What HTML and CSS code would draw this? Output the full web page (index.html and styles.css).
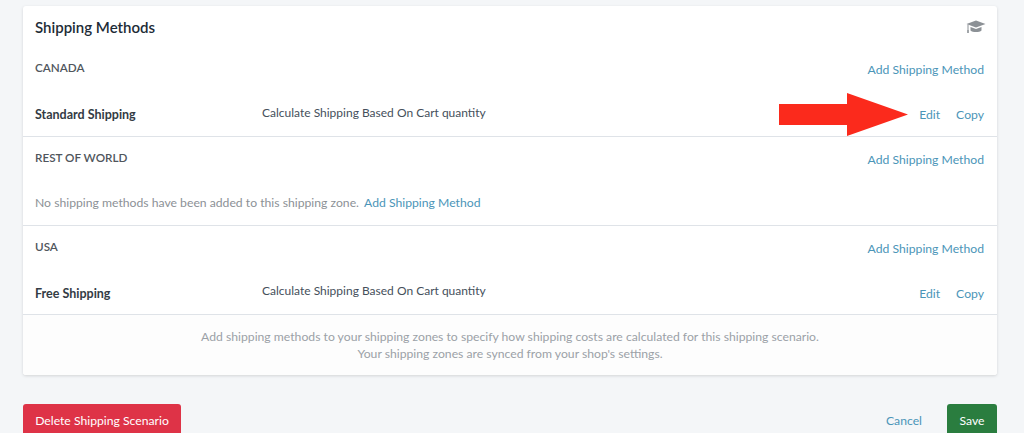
FILE: index.html
```html
<!DOCTYPE html>
<html lang="en">
<head>
    <meta charset="UTF-8">
    <title>Shipping Methods</title>
    <link rel="stylesheet" href="styles.css">
</head>
<body>
    <div class="main">
        <div class="card">
            <div class="card-head">
                <h2>Shipping Methods</h2>
                <svg class="cap" viewBox="0 0 20 14" width="20" height="14">
                    <path d="M10 0.5 L19.5 4 L10 7.5 L0.5 4 Z" fill="#8c9196"/>
                    <path d="M4.5 7 L10 9 L15.5 7 L15.5 10.5 C13.5 12.6 6.5 12.6 4.5 10.5 Z" fill="#8c9196"/>
                    <path d="M2 4.5 L2 10" stroke="#8c9196" stroke-width="1" fill="none"/>
                    <rect x="1.2" y="10" width="1.6" height="3" fill="#8c9196"/>
                </svg>
            </div>
            <div class="zone first">
                <div class="zone-head">
                    <span class="zone-name">CANADA</span>
                    <a class="link">Add Shipping Method</a>
                </div>
                <div class="method">
                    <span class="method-name">Standard Shipping</span>
                    <span class="method-desc">Calculate Shipping Based On Cart quantity</span>
                    <span class="actions"><a class="link">Edit</a><a class="link">Copy</a></span>
                </div>
            </div>
            <div class="zone">
                <div class="zone-head">
                    <span class="zone-name">REST OF WORLD</span>
                    <a class="link">Add Shipping Method</a>
                </div>
                <div class="empty">No shipping methods have been added to this shipping zone. <a class="link">Add Shipping Method</a></div>
            </div>
            <div class="zone">
                <div class="zone-head">
                    <span class="zone-name">USA</span>
                    <a class="link">Add Shipping Method</a>
                </div>
                <div class="method">
                    <span class="method-name">Free Shipping</span>
                    <span class="method-desc">Calculate Shipping Based On Cart quantity</span>
                    <span class="actions"><a class="link">Edit</a><a class="link">Copy</a></span>
                </div>
            </div>
            <div class="card-foot">
                Add shipping methods to your shipping zones to specify how shipping costs are calculated for this shipping scenario.<br>
                Your shipping zones are synced from your shop's settings.
            </div>
        </div>
        <div class="bottom-bar">
            <button class="btn btn-red">Delete Shipping Scenario</button>
            <div class="bottom-right">
                <a class="link">Cancel</a>
                <button class="btn btn-green">Save</button>
            </div>
        </div>
    </div>
    <svg class="arrow" viewBox="0 0 130 44" width="130" height="44">
        <polygon points="0,11 68,11 68,0 129,21.5 68,43 68,32 0,32" fill="#fb2a1c"/>
    </svg>
</body>
</html>
```

FILE: styles.css
```css
*{
    padding:0;
    margin:0;
    box-sizing:border-box;
}
body{
    background:#f4f6f8;
    font-family:"Lato","Open Sans",sans-serif;
    font-size:12.2px;
    color:#454f5b;
    height:433px;
    overflow:hidden;
}
.main{
    padding:6px 27px 0 23px;
}
.card{
    background:#fff;
    border-radius:3px;
    box-shadow:0 1px 3px rgba(63,63,68,0.18);
    height:369px;
}
.card-head{
    height:43px;
    padding:0 12px 1px;
    display:flex;
    justify-content:space-between;
    align-items:center;
}
.card-head h2{
    font-size:15px;
    font-weight:600;
    color:#212b36;
}
.cap{
    margin-right:-1px;
}
.zone{
    height:89px;
    border-bottom:1px solid #dfe3e8;
    padding:0 13px 0 12px;
}
.zone.first{
    height:88px;
}
.zone-head{
    display:flex;
    justify-content:space-between;
    padding-top:12px;
    height:52px;
}
.zone.first .zone-head{
    height:50px;
    padding-top:10px;
}
.zone-name{
    color:#50565c;
    font-size:11.7px;
    font-weight:600;
    line-height:16px;
}
.zone-head .link{
    line-height:16px;
    padding-top:3px;
}
.link{
    color:#4b95b8;
    cursor:pointer;
}
.method{
    display:flex;
    align-items:center;
    height:28px;
}
.method-name{
    width:227px;
    font-size:12.5px;
    font-weight:700;
    color:#333b44;
    padding-top:2px;
}
.method-desc{
    font-size:12px;
    color:#454f5b;
    margin-top:-4px;
}
.zone.first .method-desc{
    margin-top:-2px;
}
.actions{
    margin-left:auto;
    display:flex;
    gap:16px;
    padding-top:2px;
}
.empty{
    color:#8c9196;
    line-height:28px;
}
.empty .link{
    margin-left:2px;
}
.card-foot{
    height:60px;
    background:#fdfdfd;
    border-radius:0 0 3px 3px;
    text-align:center;
    color:#9ba1a7;
    line-height:17px;
    padding-top:13px;
}
.bottom-bar{
    display:flex;
    justify-content:space-between;
    margin-top:29px;
}
.bottom-right{
    display:flex;
    align-items:center;
    gap:25px;
}
.btn{
    border:0;
    border-radius:3px;
    color:#fff;
    font-family:inherit;
    font-size:12.2px;
    height:32px;
}
.btn-red{
    width:158px;
    background:#de3347;
}
.btn-green{
    width:50px;
    background:#2a7d3f;
}
.arrow{
    position:absolute;
    left:779px;
    top:93px;
}
```
